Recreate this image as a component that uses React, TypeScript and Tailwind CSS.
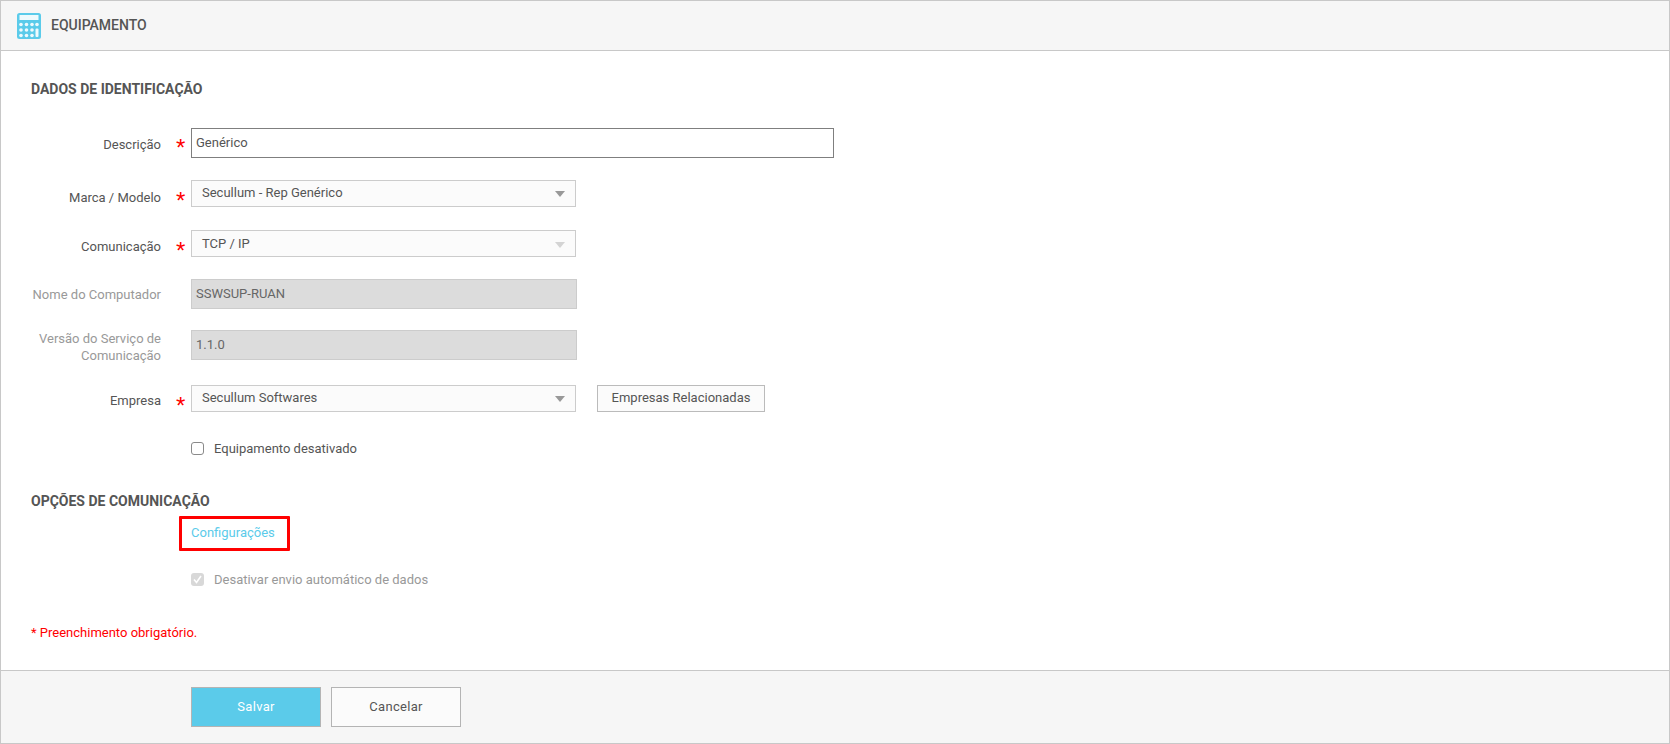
function Star({ className }: { className?: string }) {
  return <span className={`absolute left-[-16px] text-[24px] leading-[28px] text-[#ff0000] font-['Liberation_Sans',sans-serif] ${className ?? "top-[5px]"}`}>*</span>;
}

function Row({
  label,
  muted,
  className,
  labelClass,
  children,
}: {
  label: React.ReactNode;
  muted?: boolean;
  className?: string;
  labelClass?: string;
  children: React.ReactNode;
}) {
  return (
    <div className={`flex items-center ${className ?? ""}`}>
      <label className={`ml-[30px] mr-[30px] w-[130px] shrink-0 text-right leading-[17px] ${muted ? "text-[#999999]" : "text-[#555555]"} ${labelClass ?? ""}`}>
        {label}
      </label>
      {children}
    </div>
  );
}

function Select({ value, disabled }: { value: string; disabled?: boolean }) {
  return (
    <div className={`relative flex h-[27px] w-[385px] items-center justify-between border border-[#cccccc] bg-[#fbfbfb] pl-[10px] pr-[10px] text-[#555555] ${disabled ? "" : "pb-[1px]"}`}>
      <Star className="top-[6px]" />
      <span>{value}</span>
      <span className={`mt-[2px] h-0 w-0 border-x-[5px] border-t-[6px] border-x-transparent ${disabled ? "border-t-[#d4d4d4]" : "border-t-[#999999]"}`} />
    </div>
  );
}

function ReadOnly({ value }: { value: string }) {
  return (
    <div className="flex h-[30px] w-[386px] items-center border border-[#cccccc] bg-[#dcdcdc] pl-[4px] text-[#666666]">
      {value}
    </div>
  );
}

export default function App() {
  return (
    <div className="flex h-[744px] w-[1670px] flex-col border border-[#c8c8c8] bg-white font-['Roboto',sans-serif] text-[13px] text-[#555555]">
      <header className="flex h-[50px] shrink-0 items-center border-b border-[#c8c8c8] bg-[#f6f6f6] pl-[16px]">
        <svg width="24" height="26" viewBox="0 0 24 26" className="mr-[10px]">
          <rect width="24" height="26" rx="2.5" fill="#5bcbea" />
          <rect x="2.5" y="2" width="19" height="5" fill="#eefafd" />
          <g fill="#eefafd">
            {[11.5, 17, 22.5].map((y) =>
              [4, 9.5, 15].map((x) => <circle key={`${x}-${y}`} cx={x} cy={y} r="1.8" />),
            )}
            <circle cx="20" cy="11.5" r="1.8" />
            <rect x="18.5" y="15.5" width="3" height="8.5" rx="1" />
          </g>
        </svg>
        <span className="text-[14px] font-medium text-[#555555]">EQUIPAMENTO</span>
      </header>

      <main className="flex min-h-0 flex-1 flex-col">
        <h2 className="ml-[30px] mt-[30px] text-[14px] font-bold leading-[17px]">DADOS DE IDENTIFICAÇÃO</h2>

        <Row label="Descrição" className="mt-[30px]" labelClass="pt-[2px]">
          <div className="relative flex h-[30px] w-[643px] items-center border border-[#7f7f7f] pl-[4px] text-[#555555]">
            <Star />
            Genérico
          </div>
        </Row>

        <Row label="Marca / Modelo" className="mt-[22px]" labelClass="pt-[7px]">
          <Select value="Secullum - Rep Genérico" />
        </Row>

        <Row label="Comunicação" className="mt-[23px]" labelClass="pt-[5px]">
          <Select value="TCP / IP" disabled />
        </Row>

        <Row label="Nome do Computador" muted className="mt-[22px]" labelClass="pt-[1px]">
          <ReadOnly value="SSWSUP-RUAN" />
        </Row>

        <Row label={<>Versão do Serviço de<br />Comunicação</>} muted className="mt-[19px]" labelClass="translate-y-[2px]">
          <ReadOnly value="1.1.0" />
        </Row>

        <Row label="Empresa" className="mt-[23px]" labelClass="pt-[3px]">
          <Select value="Secullum Softwares" />
          <button className="ml-[21px] h-[27px] w-[168px] border border-[#bbbbbb] bg-[#fbfbfb] pb-[1px] text-[#555555]">
            Empresas Relacionadas
          </button>
        </Row>

        <div className="ml-[190px] mt-[28px] flex items-center leading-[17px]">
          <span className="mr-[10px] h-[13px] w-[13px] rounded-[3px] border border-[#8a8a8a] bg-white" />
          Equipamento desativado
        </div>

        <h2 className="ml-[30px] mt-[36px] text-[14px] font-bold leading-[17px]">OPÇÕES DE COMUNICAÇÃO</h2>

        <div className="relative ml-[190px] mt-[14px] leading-[17px] text-[#5bcbea]">
          Configurações
          <span className="absolute left-[-12px] top-[-8px] h-[35px] w-[111px] rounded-[1px] border-[3px] border-[#ff0000]" />
        </div>

        <div className="ml-[190px] mt-[30px] flex items-center leading-[17px] text-[#999999]">
          <span className="mr-[10px] flex h-[13px] w-[13px] items-center justify-center rounded-[3px] bg-[#d8d8d8]">
            <svg width="9" height="9" viewBox="0 0 9 9" fill="none" stroke="#ffffff" strokeWidth="1.6">
              <path d="M1 4.5 3.5 7.5 8 1" />
            </svg>
          </span>
          Desativar envio automático de dados
        </div>

        <p className="ml-[30px] mt-[36px] leading-[17px] text-[#ff0000]">* Preenchimento obrigatório.</p>
      </main>

      <footer className="flex h-[73px] shrink-0 items-start gap-[10px] border-t border-[#c8c8c8] bg-[#f6f6f6] pl-[190px] pt-[16px]">
        <button className="h-[40px] w-[130px] border border-[#b4b4b4] bg-[#5bcbea] tracking-[0.3px] text-white">Salvar</button>
        <button className="h-[40px] w-[130px] border border-[#b4b4b4] bg-[#fbfbfb] tracking-[0.3px] text-[#555555]">Cancelar</button>
      </footer>
    </div>
  );
}
